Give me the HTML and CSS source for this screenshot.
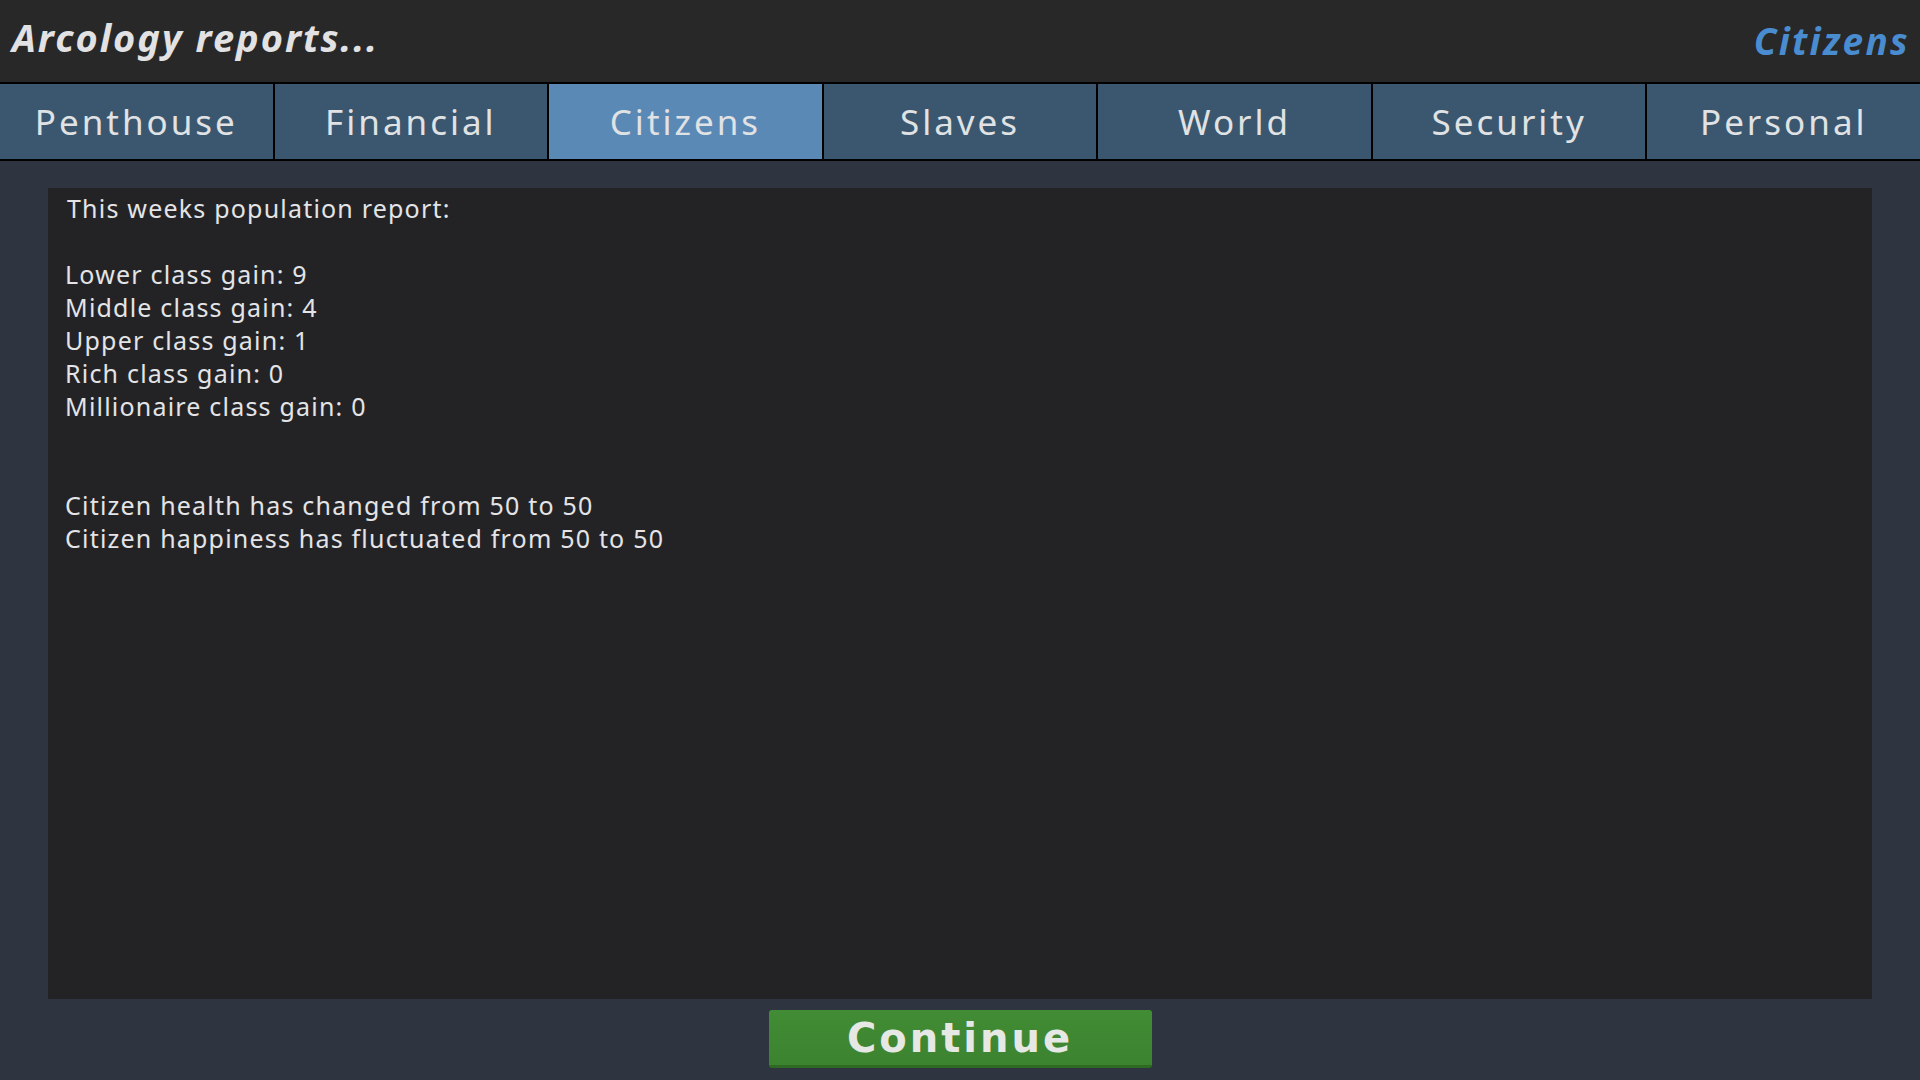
FILE: index.html
```html
<!DOCTYPE html>
<html lang="en">
<head>
<meta charset="utf-8">
<title>Arcology reports</title>
<link rel="stylesheet" href="styles.css">
</head>
<body>
<div class="app">
  <header class="topbar">
    <h1 class="title">Arcology reports...</h1>
    <div class="section-name">Citizens</div>
  </header>
  <nav class="tabs">
    <div class="tab">Penthouse</div>
    <div class="tab">Financial</div>
    <div class="tab active">Citizens</div>
    <div class="tab">Slaves</div>
    <div class="tab">World</div>
    <div class="tab">Security</div>
    <div class="tab">Personal</div>
  </nav>
  <main class="main">
    <section class="report">
      <p class="line first">This weeks population report:</p>
      <p class="line blank">&nbsp;</p>
      <p class="line">Lower class gain: 9</p>
      <p class="line">Middle class gain: 4</p>
      <p class="line">Upper class gain: 1</p>
      <p class="line">Rich class gain: 0</p>
      <p class="line">Millionaire class gain: 0</p>
      <p class="line blank">&nbsp;</p>
      <p class="line blank">&nbsp;</p>
      <p class="line">Citizen health has changed from 50 to 50</p>
      <p class="line">Citizen happiness has fluctuated from 50 to 50</p>
    </section>
    <div class="actions">
      <button class="continue">Continue</button>
    </div>
  </main>
</div>
</body>
</html>
```
FILE: styles.css
```css
* { box-sizing: border-box; }
html, body { margin: 0; padding: 0; height: 100%; }
body {
  background: #2e3540;
  color: #e4e4e6;
  font-family: "Noto Sans", "DejaVu Sans", sans-serif;
  overflow: hidden;
}
.app {
  display: flex;
  flex-direction: column;
  height: 1080px;
}
.topbar {
  height: 82px;
  background: #282828;
  display: flex;
  align-items: center;
  justify-content: space-between;
  padding: 0 10px 8px 12px;
}
.title {
  margin: 0;
  font-size: 38px;
  font-weight: 700;
  font-style: italic;
  color: #e2e2e4;
  letter-spacing: 2px;
}
.section-name {
  font-size: 37px;
  font-weight: 700;
  font-style: italic;
  color: #4a8cd0;
  letter-spacing: 2.3px;
  padding-top: 6px;
}
.tabs {
  display: flex;
  height: 79px;
  border-top: 2px solid #000;
  border-bottom: 2px solid #000;
  background: #3a576f;
}
.tab {
  flex: 1 1 0;
  display: flex;
  align-items: center;
  justify-content: center;
  font-size: 35px;
  color: #e0e2e4;
  letter-spacing: 3px;
  border-left: 2px solid #000;
}
.tab:first-child { border-left: none; }
.tab.active { background: #5b89b6; }
.main {
  flex: 1;
  display: flex;
  flex-direction: column;
  padding: 27px 48px 12px 48px;
}
.report {
  flex: 1;
  background: #232326;
  padding: 4px 17px;
}
.line {
  margin: 0;
  font-size: 25px;
  line-height: 33px;
  letter-spacing: 1.2px;
}
.line.first { padding-left: 2px; }
.actions {
  display: flex;
  justify-content: center;
  padding-top: 11px;
}
.continue {
  width: 383px;
  height: 58px;
  border: none;
  border-radius: 3px;
  background: linear-gradient(#428c35, #3c832f);
  border-bottom: 3px solid #2f6a25;
  color: #e6e8e6;
  font-family: "DejaVu Sans", sans-serif;
  font-size: 40px;
  font-weight: 700;
  letter-spacing: 3px;
  padding: 0;
}
```
